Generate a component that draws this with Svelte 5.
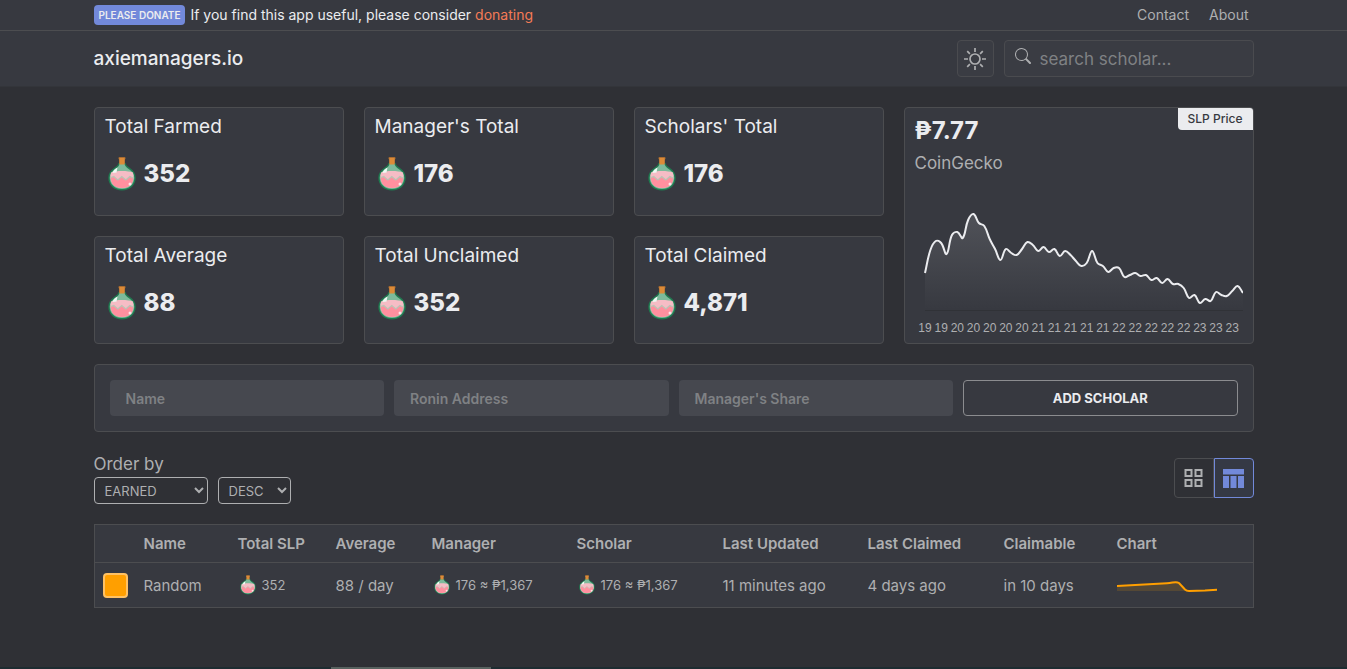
<script>
  const stats = [
    { label: 'Total Farmed', value: '352' },
    { label: "Manager's Total", value: '176' },
    { label: "Scholars' Total", value: '176' },
    { label: 'Total Average', value: '88' },
    { label: 'Total Unclaimed', value: '352' },
    { label: 'Total Claimed', value: '4,871' }
  ];

  const columns = [
    { title: '', width: 41 },
    { title: 'Name', width: 94 },
    { title: 'Total SLP', width: 98 },
    { title: 'Average', width: 96 },
    { title: 'Manager', width: 145 },
    { title: 'Scholar', width: 146 },
    { title: 'Last Updated', width: 145 },
    { title: 'Last Claimed', width: 136 },
    { title: 'Claimable', width: 113 },
    { title: 'Chart', width: 144 }
  ];

  // Height of the price above the chart's baseline, one sample per step.
  const prices = [
    37, 60, 69, 67, 56, 75, 78, 72, 90, 96, 87, 84, 71, 61, 50, 61, 57, 55, 61, 68,
    65, 59, 63, 58, 61, 54, 59, 55, 49, 44, 47, 59, 47, 44, 38, 42, 42, 33, 35, 37,
    34, 35, 30, 32, 27, 31, 26, 26, 22, 12, 15, 7, 11, 9, 18, 15, 14, 19, 24, 17
  ];
  const days = [19, 19, 20, 20, 20, 20, 20, 21, 21, 21, 21, 21, 22, 22, 22, 22, 22, 23, 23, 23];
  const baseline = 109;
  const left = 10;
  const step = (328 - left) / (prices.length - 1);
  const points = prices.map((p, i) => [left + i * step, baseline - p]);

  function smooth(pts, tension) {
    const handles = pts.map((p, i) => {
      const prev = pts[i - 1] ?? p;
      const next = pts[i + 1] ?? p;
      const d1 = Math.hypot(p[0] - prev[0], p[1] - prev[1]);
      const d2 = Math.hypot(next[0] - p[0], next[1] - p[1]);
      const a = (tension * d1) / (d1 + d2);
      const b = (tension * d2) / (d1 + d2);
      const dx = next[0] - prev[0];
      const dy = next[1] - prev[1];
      return [p[0] - a * dx, p[1] - a * dy, p[0] + b * dx, p[1] + b * dy];
    });
    let d = `M${pts[0][0]} ${pts[0][1]}`;
    for (let i = 1; i < pts.length; i++) {
      const c1 = handles[i - 1];
      const c2 = handles[i];
      d += `C${c1[2]} ${c1[3]} ${c2[0]} ${c2[1]} ${pts[i][0]} ${pts[i][1]}`;
    }
    return d;
  }
  const line = smooth(points, 0.4);

  let order = $state('EARNED');
  let direction = $state('DESC');
  let view = $state('table');
</script>

{#snippet flask()}
  <svg class="flask" viewBox="0 0 28 34" aria-hidden="true">
    <path d="M10.500 6h7c.5 2 2 3.500 4.500 5 3.500 2.300 5.700 5.500 5.700 9.700 0 7.300-5.700 12.800-13.700 12.800S.3 28 .3 20.700C.3 16.500 2.500 13.300 6 11c2.500-1.500 4-3 4.500-5z" fill="#1f7a50" />
    <path d="M11.500 7h5c.6 2.200 2 3.600 4.500 5.200 3.300 2.100 5.300 4.900 5.300 8.600 0 6.500-5 11.300-12.300 11.300S1.700 27.300 1.700 20.800c0-3.700 2-6.500 5.300-8.600 2.500-1.600 3.900-3 4.500-5.200z" fill="#7dba9b" />
    <path d="M3 15.500c5-2 17-2 22 0 2.300 8.500-2.500 15.500-11 15.500S.7 24 3 15.500z" fill="#f6bcc5" />
    <path d="M2.800 20.500l3-1 4 3.500 4-3.500 4 3.500 4-3.500 3.400 1.500C25.200 27.500 20.500 31 14 31S2.800 27.500 2.800 20.500z" fill="#ff909f" />
    <path d="M2.800 20.500l3-1 4 3.500 4-3.500 4 3.500 4-3.500 3.400 1.500" fill="none" stroke="#b9c6b6" stroke-width="1.200" />
    <path d="M4.500 16c.5-2.500 2.500-4.500 5-5.500l-1 5z" fill="#edfbf3" />
    <circle cx="22" cy="27" r="1.500" fill="#ffe6ea" />
    <rect x="10.500" y="0" width="7" height="2.500" rx="1" fill="#a96c30" />
    <rect x="11.200" y="1" width="5.600" height="6.500" rx="1" fill="#dc8b38" />
  </svg>
{/snippet}

<header>
  <div class="topbar">
    <div class="container bar">
      <p class="notice">
        <span class="badge">PLEASE DONATE</span>
        <span>If you find this app useful, please consider <a class="donate" href="#donate">donating</a></span>
      </p>
      <nav>
        <a href="#contact">Contact</a>
        <a href="#about">About</a>
      </nav>
    </div>
  </div>
  <div class="container bar main-bar">
    <a class="brand" href="#home">axiemanagers.io</a>
    <div class="tools">
      <button class="theme" aria-label="Toggle theme">
        <svg width="22" height="22" viewBox="0 0 22 22" fill="none" stroke="currentColor" stroke-width="1.700" aria-hidden="true">
          <circle cx="11" cy="11" r="5" />
          <path d="M11 0v4M11 18v4M0 11h4M18 11h4M3.200 3.200l2.700 2.700M16.100 16.100l2.700 2.700M3.200 18.800l2.700-2.700M16.100 5.900l2.700-2.700" />
        </svg>
      </button>
      <label class="search">
        <svg width="16" height="16" viewBox="0 0 16 16" fill="currentColor" aria-hidden="true">
          <path d="M11.742 10.344a6.500 6.500 0 1 0-1.397 1.398h-.001c.03.04.062.078.098.115l3.850 3.850a1 1 0 0 0 1.415-1.414l-3.850-3.850a1.007 1.007 0 0 0-.115-.1zM12 6.500a5.500 5.500 0 1 1-11 0 5.500 5.500 0 0 1 11 0z" />
        </svg>
        <input type="search" placeholder="search scholar..." aria-label="search scholar" />
      </label>
    </div>
  </div>
</header>

<main class="container">
  <section class="stats">
    {#each stats as stat}
      <article class="card">
        <h2>{stat.label}</h2>
        <p class="amount">{@render flask()}{stat.value}</p>
      </article>
    {/each}
    <article class="card price">
      <span class="tag">SLP Price</span>
      <p class="rate">₱7.77</p>
      <p class="source">CoinGecko</p>
      <svg class="chart" viewBox="0 0 328 136" aria-hidden="true">
        <defs>
          <linearGradient id="fade" x1="0" y1="0" x2="0" y2="1">
            <stop offset="0" stop-color="#ebecef" stop-opacity="0.140" />
            <stop offset="1" stop-color="#ebecef" stop-opacity="0" />
          </linearGradient>
        </defs>
        <path d="{line}L328 {baseline}L{left} {baseline}Z" fill="url(#fade)" />
        <path d="M{left} {baseline}.5H328" stroke="#303237" />
        <path d={line} fill="none" stroke="#ebecef" stroke-width="2" />
        {#each days as day, i}
          <text x={left + i * step * 3} y="131">{day}</text>
        {/each}
      </svg>
    </article>
  </section>

  <form class="card add" onsubmit={(e) => e.preventDefault()}>
    <input type="text" placeholder="Name" aria-label="Name" />
    <input type="text" placeholder="Ronin Address" aria-label="Ronin Address" />
    <input type="text" placeholder="Manager's Share" aria-label="Manager's Share" />
    <button type="submit">ADD SCHOLAR</button>
  </form>

  <section class="controls">
    <div>
      <label class="order" for="order">Order by</label>
      <div class="selects">
        <select id="order" class="by" bind:value={order}>
          <option>EARNED</option>
        </select>
        <select class="dir" aria-label="Direction" bind:value={direction}>
          <option>DESC</option>
        </select>
      </div>
    </div>
    <div class="views">
      <button class:active={view === 'grid'} aria-label="Grid view" onclick={() => (view = 'grid')}>
        <svg width="20" height="20" viewBox="0 0 20 20" fill="none" stroke="currentColor" stroke-width="2" aria-hidden="true">
          <path d="M1.500 2h6v6h-6zM11.500 2h6v6h-6zM1.500 12h6v6h-6zM11.500 12h6v6h-6z" />
        </svg>
      </button>
      <button class:active={view === 'table'} aria-label="Table view" onclick={() => (view = 'table')}>
        <svg width="22" height="20" viewBox="0 0 22 20" fill="currentColor" aria-hidden="true">
          <path d="M0 1h21v5.500H0zM0 8h6v12H0zM7.500 8h6v12h-6zM15 8h6v12h-6z" />
        </svg>
      </button>
    </div>
  </section>

  <table>
    <colgroup>
      {#each columns as column}
        <col style="width: {column.width}px" />
      {/each}
    </colgroup>
    <thead>
      <tr>
        {#each columns as column}
          <th>{column.title}</th>
        {/each}
      </tr>
    </thead>
    <tbody>
      <tr>
        <td><span class="swatch"></span></td>
        <td>Random</td>
        <td><span class="slp">{@render flask()}352</span></td>
        <td>88 / day</td>
        <td><span class="slp">{@render flask()}176 ≈ ₱1,367</span></td>
        <td><span class="slp">{@render flask()}176 ≈ ₱1,367</span></td>
        <td>11 minutes ago</td>
        <td>4 days ago</td>
        <td>in 10 days</td>
        <td>
          <svg class="spark" width="100" height="20" viewBox="0 0 100 20" aria-hidden="true">
            <path d="M0 11L50 8.300C56 8 59 6 62 8L70 16H0z" fill="#ff9f00" fill-opacity="0.150" />
            <path d="M0 11L50 8.300C56 8 59 6 62 8L68 14.500Q69.500 16 72 16L88 15.500L100 14.700" fill="none" stroke="#ff9f00" stroke-width="2" />
          </svg>
        </td>
      </tr>
    </tbody>
  </table>
</main>

<footer><span></span></footer>

<style>
  :global(body) {
    margin: 0;
    background: #2f3035;
    color: #aeafb1;
    font-family: Inter, 'Open Sans', sans-serif;
  }
  :global(#app) {
    display: flex;
    flex-direction: column;
    min-height: 100vh;
  }
  * {
    box-sizing: border-box;
  }
  p,
  h2 {
    margin: 0;
  }
  a {
    color: inherit;
    text-decoration: none;
  }
  button,
  input,
  select {
    font-family: inherit;
    color: inherit;
    margin: 0;
  }
  .container {
    width: 100%;
    max-width: 1200px;
    margin: 0 auto;
    padding: 0 20px;
  }
  header {
    border-bottom: 1px solid #33353a;
    background: #373940;
  }
  .topbar {
    border-bottom: 1px solid #4c4d50;
  }
  .bar {
    display: flex;
    align-items: center;
    justify-content: space-between;
  }
  .topbar .bar {
    height: 30px;
    padding-bottom: 1px;
    font-size: 14px;
  }
  .notice {
    display: flex;
    align-items: center;
    gap: 5px;
    color: #ebecef;
  }
  .badge {
    padding: 0 5px;
    border-radius: 4px;
    background: #7289da;
    font-size: 10px;
    font-weight: 600;
    line-height: 20px;
  }
  .donate {
    color: #f47b56;
  }
  nav {
    display: flex;
    gap: 20px;
    padding-right: 5px;
  }
  .main-bar {
    height: 55px;
  }
  .brand {
    color: #ebecef;
    font-size: 19px;
    font-weight: 500;
  }
  .tools {
    display: flex;
    gap: 10px;
  }
  .theme {
    display: grid;
    place-items: center;
    width: 37px;
    height: 37px;
    padding: 0;
    border: 1px solid #4a4b4f;
    border-radius: 4px;
    background: #3a3c43;
  }
  .search {
    display: flex;
    gap: 9px;
    width: 250px;
    height: 37px;
    padding: 0 10px;
    border: 1px solid #4a4b4f;
    border-radius: 4px;
    background: #3a3c43;
  }
  .search svg {
    flex: none;
    margin-top: 7px;
  }
  .search input {
    width: 100%;
    min-width: 0;
    padding: 0;
    border: 0;
    background: none;
    font-size: 17px;
    outline: 0;
  }
  input::placeholder {
    color: #7f8184;
    opacity: 1;
  }
  main {
    flex: 1;
  }
  .card {
    border: 1px solid #4c4d50;
    border-radius: 4px;
    background: #373940;
  }
  .stats {
    display: grid;
    grid-template-columns: repeat(3, minmax(0, 5fr)) minmax(0, 7fr);
    gap: 20px;
    margin-top: 20px;
  }
  .stats .card {
    min-height: 108px;
    padding: 6px 10px;
  }
  h2 {
    color: #ebecef;
    font-size: 19px;
    font-weight: 400;
    line-height: 26px;
  }
  .amount {
    display: flex;
    align-items: center;
    gap: 8px;
    margin-top: 16px;
    padding-left: 3px;
    color: #ebecef;
    font-size: 24px;
    font-weight: 800;
    line-height: 36px;
  }
  .flask {
    flex: none;
    width: 28px;
    height: 34px;
  }
  .stats .price {
    position: relative;
    grid-area: 1 / 4 / 3 / 5;
    display: flex;
    flex-direction: column;
    min-height: 237px;
  }
  .tag {
    position: absolute;
    top: 0;
    right: 0;
    padding: 0 10px;
    border-radius: 0 3px 0 4px;
    background: #ebecef;
    color: #373940;
    font-size: 12px;
    font-weight: 500;
    line-height: 22px;
  }
  .rate {
    color: #ebecef;
    font-size: 24px;
    font-weight: 700;
    line-height: 34px;
  }
  .source {
    font-size: 17px;
    line-height: 30px;
  }
  .chart {
    display: block;
    width: 100%;
    margin-top: auto;
  }
  .chart text {
    fill: #aeafb1;
    font-family: 'Liberation Sans', Arial, sans-serif;
    font-size: 12px;
    text-anchor: middle;
  }
  .add {
    display: grid;
    grid-template-columns: repeat(4, minmax(0, 1fr));
    gap: 10px;
    margin-top: 20px;
    padding: 15px;
  }
  .add input,
  .add button {
    height: 36px;
    padding: 0 16px;
    border: 0;
    border-radius: 4px;
    font-size: 14px;
    font-weight: 600;
  }
  .add input {
    background: #46484f;
  }
  .add button {
    border: 1px solid #8b8c8f;
    background: none;
    color: #ebecef;
    font-size: 13px;
    font-weight: 700;
  }
  .controls {
    display: flex;
    align-items: center;
    justify-content: space-between;
    margin-top: 20px;
  }
  .order {
    display: block;
    font-size: 17px;
    line-height: 25px;
  }
  .selects {
    display: flex;
    gap: 10px;
  }
  select {
    height: 27px;
    padding: 0 6px;
    border: 1px solid #aeafb1;
    border-radius: 4px;
    background: #2f3035;
    font-size: 13px;
  }
  .by {
    width: 114px;
  }
  .dir {
    width: 73px;
  }
  .views {
    display: flex;
  }
  .views button {
    display: grid;
    place-items: center;
    width: 40px;
    height: 40px;
    padding: 0;
    border: 1px solid #4c4d50;
    border-radius: 4px 0 0 4px;
    background: none;
  }
  .views button + button {
    border-radius: 0 4px 4px 0;
  }
  .views .active {
    border-color: #7289da;
    background: #353945;
    color: #7289da;
  }
  table {
    width: 100%;
    margin-top: 20px;
    border: 1px solid #4c4d50;
    border-collapse: separate;
    border-spacing: 0;
    background: #373940;
    table-layout: fixed;
    font-size: 15px;
  }
  th,
  td {
    padding: 0 8px;
    text-align: left;
    white-space: nowrap;
  }
  th {
    height: 38px;
    border-bottom: 1px solid #4c4d50;
    font-weight: 600;
  }
  td {
    height: 44px;
  }
  .swatch {
    display: block;
    width: 25px;
    height: 25px;
    border: 2px solid #ffc163;
    border-radius: 4px;
    background: #ff9f00;
  }
  .slp {
    display: flex;
    align-items: center;
    gap: 6px;
    padding-left: 2px;
    font-size: 13px;
  }
  .slp .flask {
    width: 16px;
    height: 20px;
  }
  .spark {
    display: block;
  }
  footer {
    display: flex;
    height: 2px;
    background: #1e2c31;
  }
  footer span {
    width: 160px;
    margin-left: 331px;
    background: #58625f;
  }
</style>
